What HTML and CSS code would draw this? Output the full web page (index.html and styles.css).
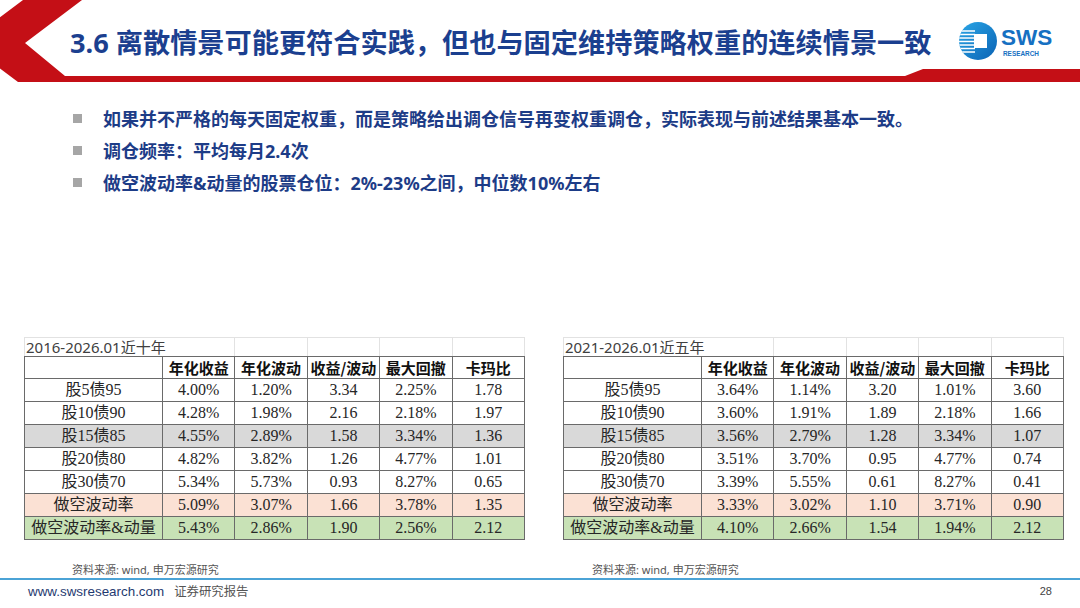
FILE: index.html
```html
<!DOCTYPE html>
<html lang="zh-CN">
<head>
<meta charset="utf-8">
<title>3.6 离散情景</title>
<link rel="stylesheet" href="styles.css">
</head>
<body>
<div class="slide">
  <header class="hd">
    <svg class="hd-deco" width="1080" height="84" viewBox="0 0 1080 84">
      <polygon points="23,0 82,0 25,43 65,76 905,76 923,69 1080,69 1080,82 18,82 -34,43" fill="#c40f16"/>
    </svg>
    <h1 class="title">3.6 离散情景可能更符合实践，但也与固定维持策略权重的连续情景一致</h1>
    <svg class="logo" width="100" height="44" viewBox="0 0 100 44">
      <defs>
        <linearGradient id="lg" x1="0" y1="0" x2="1" y2="1">
          <stop offset="0" stop-color="#2aa6e6"/>
          <stop offset="1" stop-color="#0a62b4"/>
        </linearGradient>
        <clipPath id="cc"><circle cx="21" cy="22" r="19"/></clipPath>
      </defs>
      <circle cx="21" cy="22" r="19" fill="url(#lg)"/>
      <g clip-path="url(#cc)" stroke="#ffffff" stroke-width="1.4">
        <line x1="0" y1="12" x2="18" y2="12"/>
        <line x1="0" y1="15.5" x2="18" y2="15.5"/>
        <line x1="0" y1="19" x2="18" y2="19"/>
        <line x1="0" y1="22.5" x2="18" y2="22.5"/>
        <line x1="0" y1="26" x2="18" y2="26"/>
        <line x1="0" y1="29.5" x2="18" y2="29.5"/>
        <line x1="0" y1="33" x2="18" y2="33"/>
      </g>
      <rect x="17" y="15" width="13" height="14" fill="#ffffff"/>
      <text x="44" y="26" class="logo-sws">SWS</text>
      <text x="46" y="36.8" class="logo-res">RESEARCH</text>
    </svg>
  </header>

  <ul class="bullets">
    <li><span class="mk"></span>如果并不严格的每天固定权重，而是策略给出调仓信号再变权重调仓，实际表现与前述结果基本一致。</li>
    <li><span class="mk"></span>调仓频率：平均每月2.4次</li>
    <li><span class="mk"></span>做空波动率&amp;动量的股票仓位：2%-23%之间，中位数10%左右</li>
  </ul>

  <div class="tables">
    <table class="tb">
      <colgroup><col class="c1"><col class="cn"><col class="cn"><col class="cn"><col class="cn"><col class="cn"></colgroup>
      <tr class="r-title"><td colspan="2" class="tt">2016-2026.01近十年</td><td></td><td></td><td></td><td></td></tr>
      <tr class="r-head"><td></td><td>年化收益</td><td>年化波动</td><td>收益/波动</td><td>最大回撤</td><td>卡玛比</td></tr>
      <tr><td>股5债95</td><td>4.00%</td><td>1.20%</td><td>3.34</td><td>2.25%</td><td>1.78</td></tr>
      <tr><td>股10债90</td><td>4.28%</td><td>1.98%</td><td>2.16</td><td>2.18%</td><td>1.97</td></tr>
      <tr class="r-gray"><td>股15债85</td><td>4.55%</td><td>2.89%</td><td>1.58</td><td>3.34%</td><td>1.36</td></tr>
      <tr><td>股20债80</td><td>4.82%</td><td>3.82%</td><td>1.26</td><td>4.77%</td><td>1.01</td></tr>
      <tr><td>股30债70</td><td>5.34%</td><td>5.73%</td><td>0.93</td><td>8.27%</td><td>0.65</td></tr>
      <tr class="r-pink"><td>做空波动率</td><td>5.09%</td><td>3.07%</td><td>1.66</td><td>3.78%</td><td>1.35</td></tr>
      <tr class="r-green"><td>做空波动率&amp;动量</td><td>5.43%</td><td>2.86%</td><td>1.90</td><td>2.56%</td><td>2.12</td></tr>
    </table>
    <table class="tb">
      <colgroup><col class="c1"><col class="cn"><col class="cn"><col class="cn"><col class="cn"><col class="cn"></colgroup>
      <tr class="r-title"><td colspan="2" class="tt">2021-2026.01近五年</td><td></td><td></td><td></td><td></td></tr>
      <tr class="r-head"><td></td><td>年化收益</td><td>年化波动</td><td>收益/波动</td><td>最大回撤</td><td>卡玛比</td></tr>
      <tr><td>股5债95</td><td>3.64%</td><td>1.14%</td><td>3.20</td><td>1.01%</td><td>3.60</td></tr>
      <tr><td>股10债90</td><td>3.60%</td><td>1.91%</td><td>1.89</td><td>2.18%</td><td>1.66</td></tr>
      <tr class="r-gray"><td>股15债85</td><td>3.56%</td><td>2.79%</td><td>1.28</td><td>3.34%</td><td>1.07</td></tr>
      <tr><td>股20债80</td><td>3.51%</td><td>3.70%</td><td>0.95</td><td>4.77%</td><td>0.74</td></tr>
      <tr><td>股30债70</td><td>3.39%</td><td>5.55%</td><td>0.61</td><td>8.27%</td><td>0.41</td></tr>
      <tr class="r-pink"><td>做空波动率</td><td>3.33%</td><td>3.02%</td><td>1.10</td><td>3.71%</td><td>0.90</td></tr>
      <tr class="r-green"><td>做空波动率&amp;动量</td><td>4.10%</td><td>2.66%</td><td>1.54</td><td>1.94%</td><td>2.12</td></tr>
    </table>
  </div>

  <div class="sources">
    <div class="src src-l">资料来源: wind, 申万宏源研究</div>
    <div class="src">资料来源: wind, 申万宏源研究</div>
  </div>
  <div class="rule"></div>
  <footer class="ft">
    <span class="url">www.swsresearch.com</span>
    <span class="kind">证券研究报告</span>
    <span class="page">28</span>
  </footer>
</div>
</body>
</html>
```

FILE: styles.css
```css
* { box-sizing: border-box; }
html, body { margin: 0; padding: 0; background: #ffffff; }
.slide {
  width: 1080px;
  height: 608px;
  overflow: hidden;
  background: #ffffff;
  display: flex;
  flex-direction: column;
  font-family: "Noto Sans", "Noto Sans CJK SC", sans-serif;
}

/* header */
.hd {
  position: relative;
  height: 82px;
  flex: none;
  display: flex;
  align-items: center;
}
.hd-deco { position: absolute; left: 0; top: 0; }
.title {
  position: relative;
  margin: 0 0 0 70px;
  padding-top: 3px;
  font-family: "Noto Sans", "Noto Sans CJK SC", sans-serif;
  font-weight: 700;
  font-size: 27.2px;
  line-height: 1;
  color: #1b3f8f;
  white-space: nowrap;
  flex: none;
}
.logo {
  position: relative;
  margin-left: auto;
  margin-right: 23px;
  flex: none;
}
.logo-sws {
  font-family: "Liberation Sans", Arial, sans-serif;
  font-weight: 700;
  font-size: 22.5px;
  fill: #1670c2;
}
.logo-res {
  font-family: "Liberation Sans", Arial, sans-serif;
  font-weight: 700;
  font-size: 6.4px;
  fill: #1670c2;
}

/* bullets */
.bullets {
  list-style: none;
  margin: 20px 0 0 0;
  padding: 0 0 0 73px;
  flex: none;
}
.bullets li {
  display: flex;
  align-items: center;
  height: 32px;
  font-weight: 700;
  font-size: 18px;
  color: #1d3c87;
  white-space: nowrap;
}
.mk {
  width: 9px;
  height: 9px;
  background: #a6a6a6;
  margin-right: 21px;
  flex: none;
}

/* tables */
.tables {
  display: flex;
  gap: 38px;
  margin-top: 139px;
  padding-left: 24px;
  flex: none;
}
.tb {
  border-collapse: collapse;
  table-layout: fixed;
  width: 500px;
  font-family: "Liberation Serif", "Noto Sans CJK SC", serif;
  font-size: 16px;
  color: #262626;
}
.c1 { width: 138px; }
.cn { width: 72.4px; }
.tb td {
  height: 23px;
  padding: 0;
  text-align: center;
  vertical-align: middle;
  line-height: 1;
  border: 1px solid #6a6a6a;
  white-space: nowrap;
}
.r-title td {
  height: 19px;
  border: 1px solid #e2e2e2;
  border-bottom-color: #6a6a6a;
}
.tb .tt {
  text-align: left;
  padding-left: 1px;
  font-family: "Noto Sans", "Noto Sans CJK SC", sans-serif;
  font-size: 15px;
  color: #404040;
}
.r-head td {
  height: 22px;
  font-family: "Noto Sans CJK SC", "Noto Sans", sans-serif;
  font-weight: 700;
  font-size: 15px;
  color: #111111;
}
.r-gray td { background: #d9d9d9; }
.r-pink td { background: #fbe1d4; }
.r-green td { background: #c8e2b6; }

/* sources + footer */
.sources {
  display: flex;
  margin-top: 23px;
  flex: none;
}
.src {
  font-size: 11px;
  line-height: 14px;
  color: #555555;
}
.src-l {
  width: 592px;
  padding-left: 72px;
}
.rule {
  height: 2px;
  background: #4ba3d6;
  margin-top: 1px;
  flex: none;
}
.ft {
  display: flex;
  align-items: center;
  margin-top: 3px;
  padding-left: 28px;
  padding-right: 28px;
  height: 16px;
  flex: none;
}
.url {
  font-family: "Liberation Sans", Arial, sans-serif;
  font-size: 13.4px;
  color: #1f3a70;
}
.kind {
  margin-left: 10px;
  font-size: 12.4px;
  color: #555555;
}
.page {
  margin-left: auto;
  font-family: "Liberation Sans", Arial, sans-serif;
  font-size: 11px;
  color: #444444;
}
```
